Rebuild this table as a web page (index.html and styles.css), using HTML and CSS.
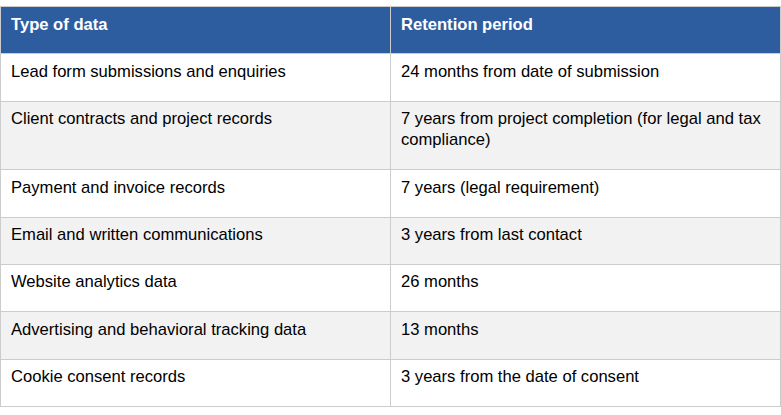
FILE: index.html
```html
<!DOCTYPE html>
<html lang="en">
<head>
<meta charset="utf-8">
<title>Data retention</title>
<link rel="stylesheet" href="styles.css">
</head>
<body>
<table class="retention">
  <thead>
    <tr>
      <th class="col-type">Type of data</th>
      <th class="col-period">Retention period</th>
    </tr>
  </thead>
  <tbody>
    <tr><td>Lead form submissions and enquiries</td><td>24 months from date of submission</td></tr>
    <tr><td>Client contracts and project records</td><td>7 years from project completion (for legal and tax compliance)</td></tr>
    <tr><td>Payment and invoice records</td><td>7 years (legal requirement)</td></tr>
    <tr><td>Email and written communications</td><td>3 years from last contact</td></tr>
    <tr><td>Website analytics data</td><td>26 months</td></tr>
    <tr><td>Advertising and behavioral tracking data</td><td>13 months</td></tr>
    <tr><td>Cookie consent records</td><td>3 years from the date of consent</td></tr>
  </tbody>
</table>
</body>
</html>
```
FILE: styles.css
```css
html, body {
  margin: 0;
  padding: 0;
  background: #ffffff;
}

body {
  padding-top: 6px;
  font-family: "Liberation Sans", Arial, sans-serif;
  font-size: 16.6px;
  color: #000000;
}

.retention {
  width: 781px;
  border-collapse: collapse;
  table-layout: fixed;
}

.retention th,
.retention td {
  border: 1px solid #cccccc;
  padding: 6.5px 10px 18.9px 10px;
  line-height: 21px;
  text-align: left;
  vertical-align: top;
}

.retention th {
  background: #2e5d9f;
  color: #ffffff;
  font-weight: bold;
}

.col-type {
  width: 369px;
}

.retention tbody tr:nth-child(even) td {
  background: #f2f2f2;
}
```
